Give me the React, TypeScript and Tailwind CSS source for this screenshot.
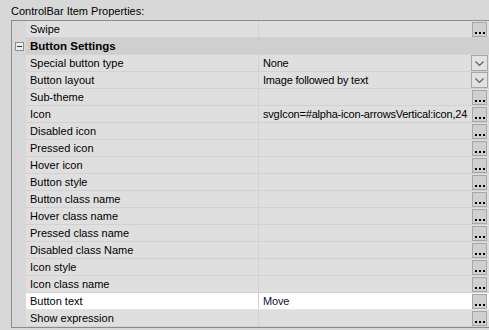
type Row = {
  name: string;
  value?: string;
  kind?: "dots" | "select";
  active?: boolean;
};

const rows: Row[] = [
  { name: "Special button type", value: "None", kind: "select" },
  { name: "Button layout", value: "Image followed by text", kind: "select" },
  { name: "Sub-theme", kind: "dots" },
  { name: "Icon", value: "svgIcon=#alpha-icon-arrowsVertical:icon,24", kind: "dots" },
  { name: "Disabled icon", kind: "dots" },
  { name: "Pressed icon", kind: "dots" },
  { name: "Hover icon", kind: "dots" },
  { name: "Button style", kind: "dots" },
  { name: "Button class name", kind: "dots" },
  { name: "Hover class name", kind: "dots" },
  { name: "Pressed class name", kind: "dots" },
  { name: "Disabled class Name", kind: "dots" },
  { name: "Icon style", kind: "dots" },
  { name: "Icon class name", kind: "dots" },
  { name: "Button text", value: "Move", kind: "dots", active: true },
  { name: "Show expression", kind: "dots" },
];

function DotsButton() {
  return (
    <div className="w-[15px] h-[15px] mr-[2px] shrink-0 border border-[#a6a6a6] bg-[#d0d0d0] flex items-end justify-center pb-[2px] gap-[2px]">
      <span className="w-[2px] h-[2px] bg-black" />
      <span className="w-[2px] h-[2px] bg-black" />
      <span className="w-[2px] h-[2px] bg-black" />
    </div>
  );
}

function SelectButton() {
  return (
    <div className="w-[17px] h-[16px] mr-[1px] shrink-0 border border-[#a6a6a6] bg-[#e2e2e2] flex items-center justify-center">
      <svg width="9" height="6" viewBox="0 0 9 6" className="mt-[2px]">
        <polyline points="0.5,0.5 4.5,4.5 8.5,0.5" fill="none" stroke="#606060" strokeWidth="1.2" />
      </svg>
    </div>
  );
}

function PropRow({ row }: { row: Row }) {
  const bg = row.active ? "bg-white" : "bg-[#dfdfdf]";
  return (
    <div className="flex h-[17px]">
      <div className="w-[14px] shrink-0 bg-[#d8d8d8]" />
      <div className={`flex flex-1 border-b ${row.active ? "border-[#e4e4e4]" : "border-[#d2d2d2]"} ${bg}`}>
        <div className="w-[233px] shrink-0 pl-[4px] leading-[16px] border-r border-[#d2d2d2] truncate">
          {row.name}
        </div>
        <div className="flex-1 flex items-center min-w-0">
          <span className={`flex-1 pl-[4px] leading-[16px] whitespace-nowrap overflow-hidden tracking-[-0.2px] ${row.active ? "text-[#101040]" : ""}`}>
            {row.value}
          </span>
          {row.kind === "select" ? <SelectButton /> : <DotsButton />}
        </div>
      </div>
    </div>
  );
}

export default function App() {
  return (
    <div
      className="w-[489px] h-[330px] bg-[#d8d8d8] text-[11px] text-black overflow-hidden"
      style={{ fontFamily: "Tahoma, 'Liberation Sans', Arial, sans-serif" }}
    >
      <div className="h-[20px] pl-[11px] pt-[4px] leading-[14px]">ControlBar Item Properties:</div>
      <div className="ml-[11px] border-l border-t border-b border-[#8c8c8c]">
        <PropRow row={{ name: "Swipe", kind: "dots" }} />
        <div className="flex h-[17px] bg-[#cfcfcf] border-b border-[#d2d2d2]">
          <div className="w-[14px] shrink-0 flex items-center justify-center bg-[#d8d8d8]">
            <div className="w-[9px] h-[9px] border border-[#8c8c8c] bg-[#eeeeee] flex items-center justify-center">
              <span className="w-[5px] h-[1px] bg-[#333]" />
            </div>
          </div>
          <div className="pl-[4px] leading-[16px] font-bold text-[11.5px]">Button Settings</div>
        </div>
        {rows.map((r) => (
          <PropRow key={r.name} row={r} />
        ))}
      </div>
    </div>
  );
}
